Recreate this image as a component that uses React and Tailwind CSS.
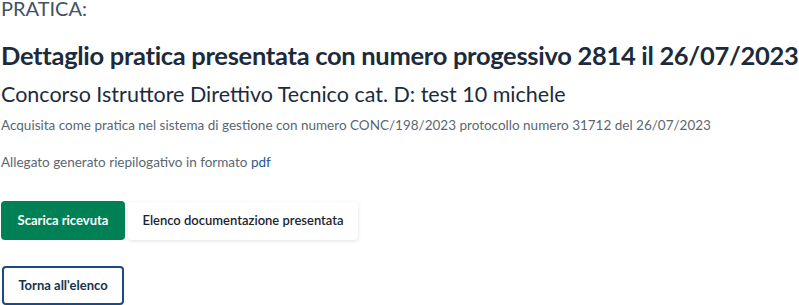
export default function App() {
  return (
    <div className="w-[799px] h-[305px] overflow-hidden bg-white font-['Lato',sans-serif] pl-px">
      <p className="text-[20px] leading-[16px] text-[#3f5266]">PRATICA:</p>
      <h1 className="mt-[23px] text-[25.5px] leading-[32px] font-bold text-[#1c2b3c] tracking-[-0.3px] whitespace-nowrap">
        Dettaglio pratica presentata con numero progessivo 2814 il 26/07/2023
      </h1>
      <h2 className="mt-[10px] text-[21.5px] leading-[26px] text-[#1c2b3c] whitespace-nowrap">
        Concorso Istruttore Direttivo Tecnico cat. D: test 10 michele
      </h2>
      <p className="mt-[8px] text-[13.5px] leading-[20px] text-[#5a6772] whitespace-nowrap">
        Acquisita come pratica nel sistema di gestione con numero CONC/198/2023 protocollo numero 31712 del 26/07/2023
      </p>
      <p className="mt-[17px] text-[13.5px] leading-[20px] text-[#5a6772]">
        Allegato generato riepilogativo in formato <a className="text-[#1f5a96]">pdf</a>
      </p>
      <div className="mt-[29px] flex items-center gap-[3px]">
        <button className="h-[39px] w-[124px] rounded-[4px] bg-[#008055] text-white text-[13px] font-bold">
          Scarica ricevuta
        </button>
        <button className="h-[38px] w-[230px] rounded-[4px] bg-white text-[#1c2430] text-[13px] font-semibold shadow-[0_1px_4px_rgba(0,0,0,0.12)]">
          Elenco documentazione presentata
        </button>
      </div>
      <button className="mt-[26px] ml-px h-[39px] w-[122px] rounded-[4px] border-2 border-[#1b4a82] bg-white text-[#17324d] text-[13px] font-bold">
        Torna all'elenco
      </button>
    </div>
  );
}
